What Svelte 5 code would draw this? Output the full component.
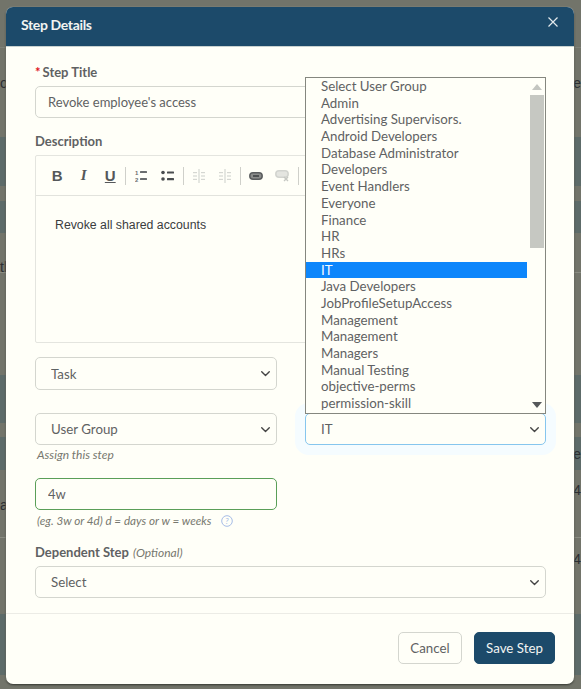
<script lang="ts">
  // strip of the page showing behind the modal
  const behind = [
    { h: 47 },
    { h: 70, left: 'o', right: 'ce', top: true, mid: true },
    { h: 19 },
    { h: 49, band: true },
    { h: 15 },
    { h: 32, band: true },
    { h: 24 },
    { h: 15, left: 'th', line: true },
    { h: 102 },
    { h: 48, band: true },
    { h: 14 },
    { h: 33, band: true, right: 'e', mid: true },
    { h: 10 },
    { h: 35, left: 'a', right: '4', split: true },
    { h: 22, line: true },
    { h: 11 },
    { h: 20, right: '4' },
    { h: 45 },
    { h: 61, band: true }
  ];

  const groups = [
    'Select User Group', 'Admin', 'Advertising Supervisors.', 'Android Developers',
    'Database Administrator', 'Developers', 'Event Handlers', 'Everyone', 'Finance',
    'HR', 'HRs', 'IT', 'Java Developers', 'JobProfileSetupAccess', 'Management',
    'Management', 'Managers', 'Manual Testing', 'objective-perms', 'permission-skill'
  ];
  let group = $state('IT');
</script>

<div class="page">
  <div class="behind">
    {#each behind as row}
      <div
        class="strip"
        class:band={row.band}
        class:line={row.line}
        class:top={row.top}
        class:mid={row.mid}
        class:split={row.split}
        style="height:{row.h}px"
      >
        <span class="l">{row.left ?? ''}</span>
        <span class="r">{row.right ?? ''}</span>
      </div>
    {/each}
  </div>

  <div class="modal">
    <header>
      <h1>Step Details</h1>
      <button class="close" aria-label="Close">
        <svg width="10" height="10" viewBox="0 0 10 10"><path d="M.5.5l9 9M9.5.5l-9 9" stroke="#e4eaec" stroke-width="1.2" fill="none" /></svg>
      </button>
    </header>

    <div class="body">
      <label class="lbl" for="title"><span class="req">*</span>Step Title</label>
      <input id="title" class="ctl" value="Revoke employee's access" />

      <div class="lbl desc">Description</div>
      <div class="editor">
        <div class="toolbar">
          <div class="group">
            <span class="tool b">B</span>
            <span class="tool i">I</span>
            <span class="tool u">U</span>
          </div>
          <div class="group">
            <span class="tool">
              <svg width="12" height="12" viewBox="0 0 12 12" fill="#6a6d6e">
                <text x="0" y="5" font-size="6" font-family="Liberation Sans" font-weight="700">1</text>
                <text x="0" y="11.5" font-size="6" font-family="Liberation Sans" font-weight="700">2</text>
                <rect x="5" y="1" width="7" height="2" rx=".5" /><rect x="5" y="8" width="7" height="2" rx=".5" />
              </svg>
            </span>
            <span class="tool">
              <svg width="13" height="12" viewBox="0 0 13 12" fill="#4a4d4f">
                <circle cx="2" cy="2.5" r="1.8" /><circle cx="2" cy="9" r="1.8" />
                <rect x="6" y="1.4" width="7" height="2.2" rx=".5" /><rect x="6" y="8" width="7" height="2.2" rx=".5" />
              </svg>
            </span>
          </div>
          <div class="group">
            <span class="tool">
              <svg width="14" height="14" viewBox="0 0 14 14" fill="#d5d7d2">
                <rect x="6.4" y="0" width="1.2" height="14" />
                <rect x="1" y="3" width="4" height="1.2" /><rect x="9" y="3" width="4" height="1.2" />
                <rect x="1" y="6.4" width="4" height="1.2" /><rect x="9" y="6.4" width="4" height="1.2" />
                <rect x="1" y="9.8" width="4" height="1.2" /><rect x="9" y="9.8" width="4" height="1.2" />
              </svg>
            </span>
            <span class="tool">
              <svg width="14" height="14" viewBox="0 0 14 14" fill="#d5d7d2">
                <rect x="6.4" y="0" width="1.2" height="14" />
                <rect x="1" y="3" width="4" height="1.2" /><rect x="9" y="3" width="4" height="1.2" />
                <rect x="1" y="6.4" width="4" height="1.2" /><rect x="9" y="6.4" width="4" height="1.2" />
                <rect x="1" y="9.8" width="4" height="1.2" /><rect x="9" y="9.8" width="4" height="1.2" />
              </svg>
            </span>
          </div>
          <div class="group">
            <span class="tool">
              <svg width="14" height="8" viewBox="0 0 14 8">
                <rect x=".8" y=".8" width="12.4" height="6.4" rx="3.2" fill="#8a8c8a" stroke="#5a5d5e" stroke-width="1.5" />
                <rect x="4" y="3.2" width="6" height="1.6" fill="#3f4244" />
              </svg>
            </span>
            <span class="tool">
              <svg width="15" height="12" viewBox="0 0 15 12">
                <rect x=".8" y=".8" width="12.4" height="6.4" rx="3.2" fill="#e4e5e0" stroke="#d2d4cf" stroke-width="1.5" />
                <path d="M9 7l4 4M13 7l-4 4" stroke="#c6c8c3" stroke-width="1.4" />
              </svg>
            </span>
          </div>
        </div>
        <div class="content">Revoke all shared accounts</div>
      </div>

      <div class="cols task">
        <select class="ctl"><option>Task</option></select>
      </div>

      <div class="cols assign">
        <div>
          <select class="ctl"><option>User Group</option></select>
          <div class="hint">Assign this step</div>
        </div>
        <div class="picker">
          <select class="ctl focus" bind:value={group}>
            {#each groups as g}<option>{g}</option>{/each}
          </select>
          <div class="popup">
            <ul>
              {#each groups as g, i}
                <li class:sel={i === 11}>{g}</li>
              {/each}
            </ul>
            <div class="scroll">
              <svg class="arrow" width="10" height="6" viewBox="0 0 10 6"><path d="M5 0l5 6H0z" fill="#c4c6c1" /></svg>
              <div class="thumb"></div>
              <svg class="arrow down" width="10" height="6" viewBox="0 0 10 6"><path d="M0 0h10L5 6z" fill="#55585a" /></svg>
            </div>
          </div>
        </div>
      </div>

      <div class="cols due">
        <div>
          <input class="ctl valid" value="4w" />
          <div class="hint small">
            (eg. 3w or 4d) d = days or w = weeks
            <svg class="help" width="12" height="12" viewBox="0 0 12 12">
              <circle cx="6" cy="6" r="5.3" fill="none" stroke="#a6bce6" />
              <text x="6" y="8.8" text-anchor="middle" font-size="8" font-family="Lato" fill="#a6bce6">?</text>
            </svg>
          </div>
        </div>
      </div>

      <label class="lbl dep" for="dep">Dependent Step <em>(Optional)</em></label>
      <select id="dep" class="ctl"><option>Select</option></select>
    </div>

    <footer>
      <button class="btn cancel">Cancel</button>
      <button class="btn save">Save Step</button>
    </footer>
  </div>
</div>

<style>
  :global(body) {
    margin: 0;
  }

  .page {
    position: relative;
    width: 581px;
    height: 689px;
    overflow: hidden;
    background: #72746a;
    font-family: Lato, sans-serif;
    font-size: 13.3px;
    color: #5f6263;
  }

  .strip {
    display: flex;
    justify-content: space-between;
    font-family: 'Liberation Sans', sans-serif;
    font-size: 14px;
    line-height: 20px;
    color: #2c2f33;
  }
  .strip.band {
    background: #5d6b69;
  }
  .strip.line {
    border-bottom: 1px solid #8a8c82;
  }
  .strip.top {
    border-top: 1px solid #7f8178;
  }
  .strip.mid {
    align-items: center;
  }
  .strip.split .l {
    align-self: flex-end;
  }

  .modal {
    position: absolute;
    left: 6px;
    top: 7px;
    width: 568px;
    height: 677px;
    display: flex;
    flex-direction: column;
    background: #fffff8;
    border-radius: 7px;
    box-shadow: 0 1px 2px rgba(30, 32, 28, 0.8), 0 0 0 1px rgba(150, 152, 140, 0.35);
  }

  header {
    flex: none;
    height: 40px;
    display: flex;
    align-items: center;
    justify-content: space-between;
    padding: 0 16px 4px 15px;
    background: #1c4a6a;
    border-radius: 7px 7px 0 0;
    border-bottom: 1px solid #c9d2d0;
    box-sizing: border-box;
  }
  h1 {
    margin: 0;
    font-size: 14px;
    font-weight: 700;
    color: #f2f4f2;
    letter-spacing: -0.35px;
  }
  .close {
    display: flex;
    margin: 0 0 6px;
    padding: 0;
    border: 0;
    background: none;
  }

  .body {
    flex: none;
    height: 567px;
    box-sizing: border-box;
    padding: 17px 28px 0 29px;
    border-bottom: 1px solid #ecece6;
  }

  .lbl {
    display: block;
    height: 16px;
    line-height: 16px;
    margin-bottom: 6px;
    font-size: 13px;
    font-weight: 700;
    color: #5f6263;
  }
  .lbl em {
    margin-left: 1px;
    font-size: 12px;
    font-weight: 400;
    color: #77786f;
  }
  .req {
    margin-right: 2px;
    color: #e0141c;
  }
  .desc {
    margin-top: 15px;
  }
  .dep {
    margin-top: 16px;
  }

  .ctl {
    display: block;
    width: 100%;
    height: 32px;
    box-sizing: border-box;
    padding: 0 12px;
    background-color: #fffff8;
    border: 1px solid #d4d6cf;
    border-radius: 5px;
    font-family: Lato, sans-serif;
    font-size: 13px;
    color: #5f6263;
    outline: none;
  }
  select.ctl {
    appearance: none;
    padding: 0 30px 0 15px;
    font-size: 13.3px;
    background-image: url("data:image/svg+xml,%3Csvg xmlns='http://www.w3.org/2000/svg' viewBox='0 0 16 16'%3E%3Cpath fill='none' stroke='%23444' stroke-linecap='round' stroke-linejoin='round' stroke-width='2' d='M2.5 5.5l5.5 5.5 5.5-5.5'/%3E%3C/svg%3E");
    background-repeat: no-repeat;
    background-position: right 5.5px center;
    background-size: 11px 11px;
  }
  .ctl.focus {
    border-color: #86c6ee;
    box-shadow: 0 0 0 10px #f5fcff;
  }
  .ctl.valid {
    border-color: #5a9f58;
  }

  .editor {
    height: 188px;
    box-sizing: border-box;
    border: 1px solid #e4e5df;
    border-radius: 2px;
  }
  .toolbar {
    display: flex;
    height: 40px;
    box-sizing: border-box;
    padding: 0 0 0 8px;
    align-items: center;
    border-bottom: 1px solid #e2e3dd;
  }
  .group {
    display: flex;
    height: 18px;
    align-items: center;
    padding-right: 1.5px;
    margin-right: 2px;
    border-right: 1px solid #cfd0ca;
  }
  .tool {
    width: 26.5px;
    display: flex;
    justify-content: center;
    align-items: center;
    font-family: 'Liberation Sans', sans-serif;
    font-size: 15px;
    font-weight: 700;
    color: #55585a;
  }
  .tool.i {
    font-style: italic;
    font-family: 'Liberation Serif', serif;
    font-size: 15px;
  }
  .tool.u {
    text-decoration: underline;
  }
  .content {
    padding: 22px 19px;
    font-family: 'Liberation Sans', sans-serif;
    font-size: 12.3px;
    line-height: 15px;
    color: #3a3d3f;
  }

  .cols {
    display: grid;
    grid-template-columns: 242px 241px;
    column-gap: 28px;
  }
  .cols.task {
    margin-top: 14px;
  }
  .cols.task .ctl {
    height: 33px;
  }
  .cols.assign {
    margin-top: 23px;
  }
  .cols.due {
    margin-top: 15px;
  }
  .hint {
    height: 16px;
    margin-top: 2px;
    padding-left: 2px;
    line-height: 16px;
    font-size: 12px;
    font-style: italic;
    color: #77786f;
  }
  .hint.small {
    font-size: 11.7px;
  }
  .help {
    margin-left: 7px;
    vertical-align: -2px;
  }

  .picker {
    position: relative;
  }
  .popup {
    position: absolute;
    left: 0;
    top: -336px;
    width: 241px;
    height: 337px;
    box-sizing: border-box;
    display: flex;
    background: #fffff8;
    border: 1px solid #85877f;
    z-index: 2;
  }
  .popup ul {
    flex: 1;
    margin: 0;
    padding: 0;
    list-style: none;
    overflow: hidden;
  }
  .popup li {
    height: 16.7px;
    line-height: 16.7px;
    padding-left: 15px;
    white-space: nowrap;
  }
  .popup li.sel {
    background: #0d86fb;
    color: #f4fbff;
  }
  .scroll {
    flex: none;
    width: 17px;
    box-sizing: border-box;
    display: flex;
    flex-direction: column;
    align-items: center;
    margin-left: 1px;
  }
  .arrow {
    flex: none;
    margin-top: 6px;
  }
  .arrow.down {
    margin-top: 154px;
  }
  .thumb {
    flex: none;
    width: 14px;
    height: 153px;
    margin-top: 5px;
    background: #c6c8c2;
  }

  footer {
    flex: 1;
    display: flex;
    justify-content: flex-end;
    gap: 12px;
    padding: 18px 19px 0 0;
    box-sizing: border-box;
  }
  .btn {
    height: 32px;
    padding: 0;
    border-radius: 5px;
    font-family: Lato, sans-serif;
    font-size: 13.3px;
  }
  .cancel {
    width: 64px;
    background: #fffff8;
    border: 1px solid #d4d6cf;
    color: #5f6263;
  }
  .save {
    width: 81px;
    background: #1c4a6a;
    border: 1px solid #1c4a6a;
    color: #f2f4f2;
  }
</style>
